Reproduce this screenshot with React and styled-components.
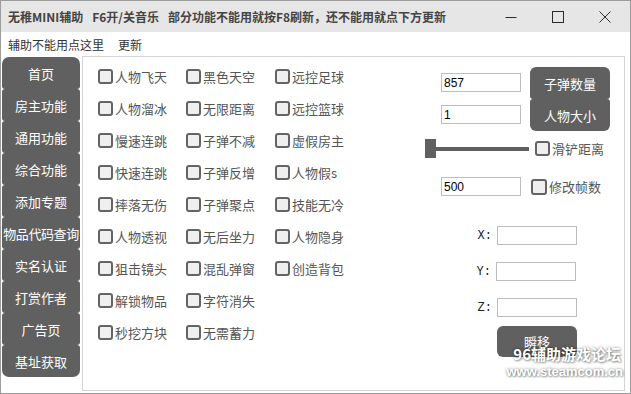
import React from 'react';
import styled, { createGlobalStyle } from 'styled-components';

const Global = createGlobalStyle`
  html, body { margin: 0; padding: 0; background: #fff; }
  body { font-family: "Noto Sans CJK SC", "Noto Sans", sans-serif; }
  * { box-sizing: border-box; }
`;

const Window = styled.div`
  position: relative;
  width: 631px;
  height: 394px;
  border: 1px solid #9c9c9c;
  background: #fff;
  display: flex;
  flex-direction: column;
  overflow: hidden;
`;

const TitleBar = styled.div`
  height: 31px;
  flex: none;
  background: #e6e6e6;
  display: flex;
  align-items: center;
  padding: 0 2px 0 7px;
`;

const TitleText = styled.span`
  font-size: 12px;
  font-weight: 700;
  color: #444;
  margin-right: 9px;
  white-space: nowrap;
`;

const Controls = styled.div`
  margin-left: auto;
  display: flex;
  height: 100%;
`;

const CtrlBtn = styled.div`
  width: 47px;
  height: 100%;
  display: flex;
  align-items: center;
  justify-content: center;
`;

const MenuBar = styled.div`
  height: 24px;
  flex: none;
  display: flex;
  align-items: center;
  padding-left: 7px;
  gap: 14px;
  font-size: 12px;
  color: #333;
`;

const Body = styled.div`
  flex: 1;
  display: flex;
  padding: 0 5px 2px 0;
`;

const Sidebar = styled.div`
  width: 81px;
  flex: none;
  padding: 1px 0 0 1px;
  display: flex;
  flex-direction: column;
`;

const NavButton = styled.div`
  width: 78px;
  height: 32px;
  background: #606060;
  color: #fff;
  font-size: 13px;
  display: flex;
  align-items: center;
  justify-content: center;
  white-space: nowrap;
  letter-spacing: ${p => (p.$tight ? '-0.4px' : '0')};
  border-radius: ${p => (p.$first ? '7px 7px 3px 3px' : p.$last ? '3px 3px 7px 7px' : '3px')};
`;

const Panel = styled.div`
  flex: 1;
  border: 1px solid #d4d4d4;
  display: flex;
`;

const CheckGrid = styled.div`
  width: 342px;
  flex: none;
  padding: 3px 0 0 15px;
  display: grid;
  grid-template-columns: 88px 89px 1fr;
  grid-template-rows: repeat(9, 32px);
  grid-auto-flow: column;
  align-content: start;
`;

const CheckItem = styled.label`
  display: flex;
  align-items: center;
  gap: 2px;
  font-size: 13px;
  color: #555;
  white-space: nowrap;
  margin-left: ${p => p.$ml || 0}px;
`;

const Box = styled.span`
  width: ${p => p.$size || 15}px;
  height: ${p => p.$size || 15}px;
  flex: none;
  border: 2px solid #646464;
  border-radius: 3px;
  background: #efefef;
`;

const RightPane = styled.div`
  flex: 1;
  display: flex;
  flex-direction: column;
`;

const RowA = styled.div`
  display: flex;
  margin-top: 10px;
  padding-left: 16px;
`;

const InputCol = styled.div`
  display: flex;
  flex-direction: column;
  padding-top: 6px;
  gap: 13px;
`;

const TextInput = styled.div`
  width: ${p => p.$w || 80}px;
  height: 19px;
  border: 1px solid #bdbdbd;
  background: #fff;
  font-family: "Liberation Sans", Arial, sans-serif;
  font-size: 12px;
  color: #000;
  padding-left: 2px;
  display: flex;
  align-items: center;
`;

const ButtonCol = styled.div`
  display: flex;
  flex-direction: column;
  margin-left: 9px;
`;

const DarkButton = styled.div`
  width: 80px;
  height: ${p => p.$h || 32}px;
  background: #606060;
  color: #fff;
  font-size: 13px;
  display: flex;
  align-items: center;
  justify-content: center;
  border-radius: ${p => p.$radius || '6px'};
  margin-left: ${p => p.$ml || 0}px;
  margin-top: ${p => p.$mt || 0}px;
`;

const SliderRow = styled.div`
  display: flex;
  align-items: center;
  margin-top: 8px;
  height: 19px;
`;

const Thumb = styled.div`
  width: 11px;
  height: 19px;
  background: #606060;
`;

const Track = styled.div`
  width: 93px;
  height: 4px;
  background: #606060;
`;

const RowC = styled.div`
  display: flex;
  align-items: center;
  margin-top: 19px;
  padding-left: 16px;
`;

const CoordList = styled.div`
  display: flex;
  flex-direction: column;
  gap: 17px;
  margin-top: 30px;
`;

const CoordRow = styled.div`
  display: flex;
  align-items: center;
`;

const CoordLabel = styled.span`
  width: ${p => p.$w || 69}px;
  padding-right: 2px;
  text-align: right;
  font-family: "Liberation Mono", "DejaVu Sans Mono", monospace;
  font-size: 12px;
  color: #222;
  margin-right: 3px;
`;

const Watermark = styled.div`
  position: absolute;
  right: 9px;
  bottom: 15px;
  display: flex;
  flex-direction: column;
  align-items: flex-end;
  color: #fff;
  font-weight: 700;
  line-height: 1;
  text-shadow: 0 0 3px rgba(0,0,0,0.5), 1px 1px 2px rgba(0,0,0,0.3);
  pointer-events: none;
`;

const WmBig = styled.span`
  font-size: 15px;
  margin-bottom: 4px;
`;

const WmSmall = styled.span`
  font-family: "Liberation Sans", Arial, sans-serif;
  font-size: 13px;
  margin-right: -2px;
`;

const navItems = ['首页', '房主功能', '通用功能', '综合功能', '添加专题', '物品代码查询', '实名认证', '打赏作者', '广告页', '基址获取'];

const checks = [
  '人物飞天', '人物溜冰', '慢速连跳', '快速连跳', '摔落无伤', '人物透视', '狙击镜头', '解锁物品', '秒挖方块',
  '黑色天空', '无限距离', '子弹不减', '子弹反增', '子弹聚点', '无后坐力', '混乱弹窗', '字符消失', '无需蓄力',
  '远控足球', '远控篮球', '虚假房主', '人物假s', '技能无冷', '人物隐身', '创造背包',
];

const Icon = ({ children }) => (
  <svg width="12" height="12" viewBox="0 0 12 12" fill="none" stroke="#2b2b2b" strokeWidth="1">
    {children}
  </svg>
);

export default function App() {
  return (
    <>
      <Global />
      <Window>
        <TitleBar>
          <TitleText>无稚MINI辅助</TitleText>
          <TitleText>F6开/关音乐</TitleText>
          <TitleText>部分功能不能用就按F8刷新，还不能用就点下方更新</TitleText>
          <Controls>
            <CtrlBtn>
              <Icon><line x1="0.5" y1="6.5" x2="11.5" y2="6.5" /></Icon>
            </CtrlBtn>
            <CtrlBtn>
              <Icon><rect x="0.5" y="0.5" width="11" height="11" /></Icon>
            </CtrlBtn>
            <CtrlBtn>
              <Icon><path d="M0.5 0.5 L11.5 11.5 M11.5 0.5 L0.5 11.5" /></Icon>
            </CtrlBtn>
          </Controls>
        </TitleBar>
        <MenuBar>
          <span>辅助不能用点这里</span>
          <span>更新</span>
        </MenuBar>
        <Body>
          <Sidebar>
            {navItems.map((n, i) => (
              <NavButton key={n} $first={i === 0} $last={i === navItems.length - 1} $tight={n.length > 5}>{n}</NavButton>
            ))}
          </Sidebar>
          <Panel>
            <CheckGrid>
              {checks.map(c => (
                <CheckItem key={c}><Box />{c}</CheckItem>
              ))}
            </CheckGrid>
            <RightPane>
              <RowA>
                <InputCol>
                  <TextInput>857</TextInput>
                  <TextInput>1</TextInput>
                </InputCol>
                <ButtonCol>
                  <DarkButton $radius="6px 6px 3px 3px">子弹数量</DarkButton>
                  <DarkButton $radius="3px 3px 6px 6px">人物大小</DarkButton>
                </ButtonCol>
              </RowA>
              <SliderRow>
                <Thumb />
                <Track />
                <CheckItem $ml={6}><Box />滑铲距离</CheckItem>
              </SliderRow>
              <RowC>
                <TextInput>500</TextInput>
                <CheckItem $ml={10}><Box $size={16} />修改帧数</CheckItem>
              </RowC>
              <CoordList>
                <CoordRow><CoordLabel>X:</CoordLabel><TextInput /></CoordRow>
                <CoordRow><CoordLabel $w={68}>Y:</CoordLabel><TextInput /></CoordRow>
                <CoordRow><CoordLabel>Z:</CoordLabel><TextInput /></CoordRow>
              </CoordList>
              <DarkButton $ml={72} $mt={9} $h={31}>瞬移</DarkButton>
            </RightPane>
          </Panel>
        </Body>
        <Watermark>
          <WmBig>96辅助游戏论坛</WmBig>
          <WmSmall>www.steamcom.cn</WmSmall>
        </Watermark>
      </Window>
    </>
  );
}
